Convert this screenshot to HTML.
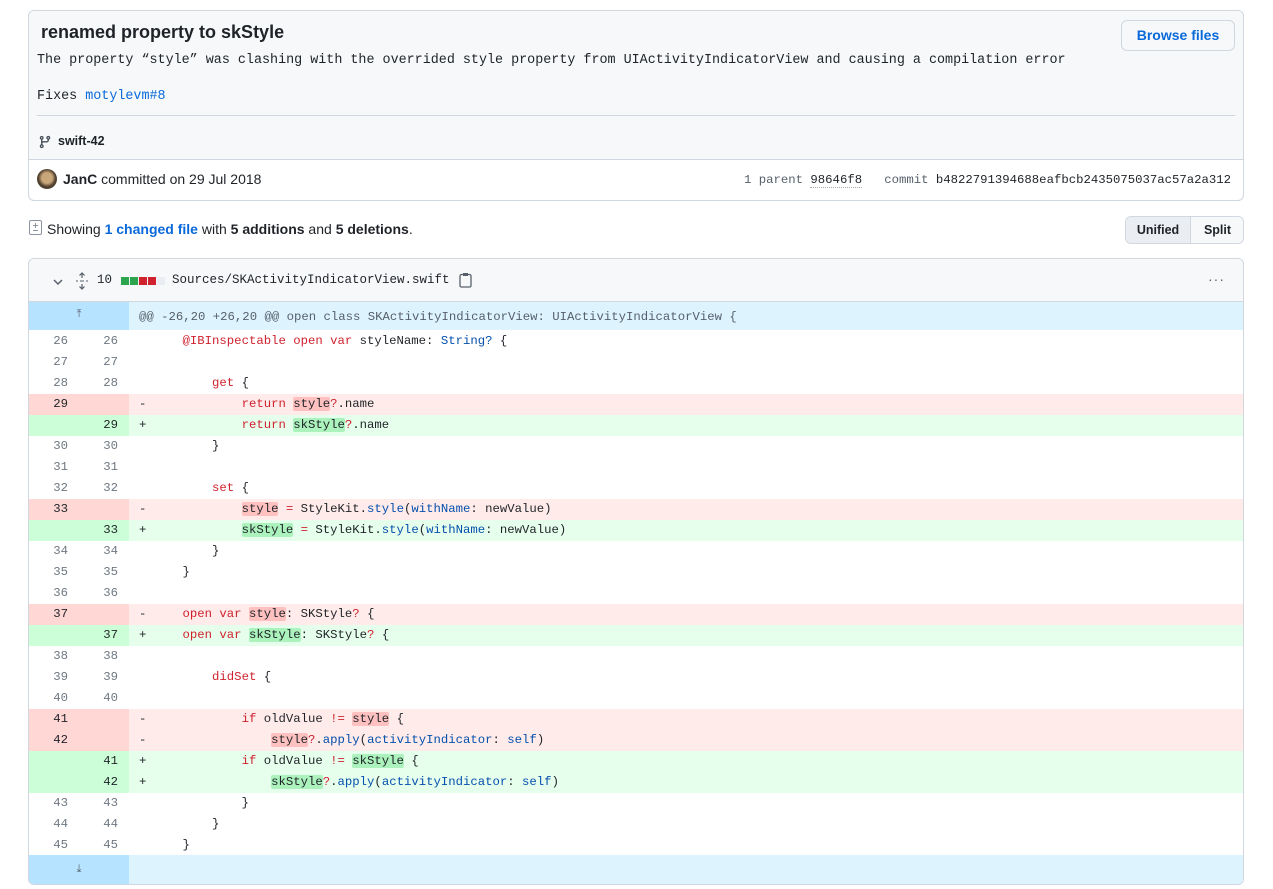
<!DOCTYPE html>
<html><head><meta charset="utf-8"><style>
*{box-sizing:border-box;margin:0;padding:0}
body{width:1273px;height:889px;background:#fff;font-family:"Liberation Sans",sans-serif;color:#1f2328;position:relative;overflow:hidden}
.mono{font-family:"Liberation Mono",monospace}
.abs{position:absolute}
#commit{left:28px;top:10px;width:1216px;height:191px;border:1px solid #d0d7de;border-radius:6px;overflow:hidden}
#chead{position:absolute;left:0;top:0;right:0;height:149px;background:#f6f8fa;border-bottom:1px solid #d0d7de}
#file{left:28px;top:258px;width:1216px;height:627px;border:1px solid #d0d7de;border-radius:6px;overflow:hidden}
#fhead{position:absolute;left:0;top:0;right:0;height:43px;background:#f6f8fa;border-bottom:1px solid #d0d7de}
.row{position:absolute;left:0;right:0;height:21px;font-family:"Liberation Mono",monospace;font-size:12.3px;line-height:21px;white-space:pre}
.n1,.n2{position:absolute;top:0;width:50px;height:21px;text-align:right;color:#6e7781}
.n1{left:0;width:50px;padding-right:11px}
.n2{left:50px;width:50px;padding-right:11px}
.g{position:absolute;left:0;top:0;width:100px;height:21px}
.m{position:absolute;left:110px;top:0}
.c{position:absolute;left:124px;top:0;color:#1f2328}
.del{background:#ffebe9}.del .g{background:#ffd7d5}
.add{background:#e6ffec}.add .g{background:#ccffd8}
.del .n1,.del .n2,.add .n1,.add .n2{color:#1f2328}
.k{color:#cf222e}.b{color:#0550ae}
.hd{background:#ff818266;border-radius:2px}
.ha{background:#abf2bc;border-radius:2px}
</style></head><body>
<div id="commit" class="abs">
 <div id="chead">
  <div class="abs" style="left:12px;top:11px;font-size:18px;font-weight:bold;">renamed property to skStyle</div>
  <div class="abs mono" style="left:8px;top:42px;font-size:13.4px;color:#1f2328;">The property “style” was clashing with the overrided style property from UIActivityIndicatorView and causing a compilation error</div>
  <div class="abs mono" style="left:8px;top:78px;font-size:13.4px;">Fixes <span style="color:#0969da">motylevm#8</span></div>
  <div class="abs" style="left:8px;right:8px;top:104px;height:1px;background:#d0d7de"></div>
  <svg class="abs" style="left:9px;top:123px" width="14" height="16" viewBox="0 0 16 16"><path fill="#444d56" d="M9.5 3.25a2.25 2.25 0 1 1 3 2.122V6A2.5 2.5 0 0 1 10 8.5H6a1 1 0 0 0-1 1v1.128a2.251 2.251 0 1 1-1.5 0V5.372a2.25 2.25 0 1 1 1.5 0v1.836A2.5 2.5 0 0 1 6 7h4a1 1 0 0 0 1-1v-.628A2.25 2.25 0 0 1 9.5 3.25Zm-6 0a.75.75 0 1 0 1.5 0 .75.75 0 0 0-1.5 0Zm8.25-.75a.75.75 0 1 0 0 1.5.75.75 0 0 0 0-1.5ZM4.25 12a.75.75 0 1 0 0 1.5.75.75 0 0 0 0-1.5Z"/></svg>
  <div class="abs" style="left:29px;top:123px;font-size:12.5px;font-weight:bold;">swift-42</div>
  <div class="abs" style="left:1092px;top:9px;width:114px;height:31px;border:1px solid #d0d7de;border-radius:6px;background:#f6f8fa;color:#0969da;font-size:14px;font-weight:bold;text-align:center;line-height:29px;">Browse files</div>
 </div>
 <div class="abs" style="left:8px;top:158px;width:20px;height:20px;border-radius:50%;background:radial-gradient(circle at 50% 45%,#c9a77a 0 35%,#4a3a2a 60%,#7a6a50 100%)"></div>
 <div class="abs" style="left:34px;top:160px;font-size:14px;"><b>JanC</b> committed on 29 Jul 2018</div>
 <div class="abs mono" style="left:715px;top:162px;font-size:12.3px;color:#57606a;">1 parent <span style="color:#1f2328;border-bottom:1px dotted #aaa">98646f8</span>&nbsp;&nbsp;&nbsp;commit <span style="color:#1f2328">b4822791394688eafbcb2435075037ac57a2a312</span></div>
</div>

<svg class="abs" style="left:29px;top:220px" width="14" height="16" viewBox="0 0 14 16"><rect x="0.5" y="0.5" width="12" height="14" rx="1.5" fill="none" stroke="#8c959f"/><path d="M6.5 3v5M4 5.5h5M4 10.5h5" stroke="#8c959f"/></svg>
<div class="abs" style="left:47px;top:221px;font-size:14px;">Showing <span style="color:#0969da;font-weight:bold">1 changed file</span> with <b>5 additions</b> and <b>5 deletions</b>.</div>
<div class="abs" style="left:1125px;top:216px;width:119px;height:28px;border:1px solid #d0d7de;border-radius:6px;overflow:hidden;font-size:12.5px;font-weight:bold;">
 <div class="abs" style="left:0;top:0;width:65px;height:26px;background:#eaeef2;border-right:1px solid #d0d7de;text-align:center;line-height:26px;">Unified</div>
 <div class="abs" style="left:65px;top:0;width:53px;height:26px;background:#f6f8fa;text-align:center;line-height:26px;">Split</div>
</div>

<div id="file" class="abs">
 <div id="fhead">
  <svg class="abs" style="left:23px;top:17px" width="12" height="12" viewBox="0 0 12 12"><path d="M2 4l4 4 4-4" fill="none" stroke="#57606a" stroke-width="1.5"/></svg>
  <svg class="abs" style="left:46px;top:13px" width="14" height="18" viewBox="0 0 14 18"><path d="M7 1v5M7 12v5M4.5 3.5L7 1l2.5 2.5M4.5 14.5L7 17l2.5-2.5" fill="none" stroke="#57606a" stroke-width="1.2"/><path d="M1 9h2M5 9h4M11 9h2" stroke="#57606a"/></svg>
  <div class="abs mono" style="left:68px;top:14px;font-size:12.5px;">10</div>
  <div class="abs" style="left:92px;top:18px;width:8px;height:8px;background:#2da44e"></div>
  <div class="abs" style="left:101px;top:18px;width:8px;height:8px;background:#2da44e"></div>
  <div class="abs" style="left:110px;top:18px;width:8px;height:8px;background:#cf222e"></div>
  <div class="abs" style="left:119px;top:18px;width:8px;height:8px;background:#cf222e"></div>
  <div class="abs" style="left:128px;top:18px;width:8px;height:8px;background:#eaeef2"></div>
  <div class="abs mono" style="left:143px;top:14px;font-size:12.5px;">Sources/SKActivityIndicatorView.swift</div>
  <svg class="abs" style="left:430px;top:13px" width="13" height="16" viewBox="0 0 13 16"><rect x="1" y="2.5" width="11" height="12.5" rx="1.5" fill="none" stroke="#57606a" stroke-width="1.3"/><rect x="4" y="1" width="5" height="3" fill="#57606a"/></svg>
  <div class="abs" style="left:1179px;top:12px;font-size:14px;color:#57606a;letter-spacing:1px;">···</div>
 </div>
 <div class="abs" style="left:0;top:43px;right:0;height:28px;background:#ddf4ff"></div>
 <div class="abs" style="left:0;top:43px;width:100px;height:28px;background:#b6e3ff;text-align:center;font-size:11px;color:#57606a;line-height:24px;">⤒</div>
 <div class="abs mono" style="left:110px;top:44px;line-height:28px;font-size:12.3px;color:#57606a;">@@ -26,20 +26,20 @@ open class SKActivityIndicatorView: UIActivityIndicatorView {</div>

 <div class="row" style="top:72px"><div class="g"></div><span class="n1">26</span><span class="n2">26</span><span class="c">    <span class="k">@IBInspectable open var</span> styleName: <span class="b">String?</span> {</span></div>
 <div class="row" style="top:93px"><div class="g"></div><span class="n1">27</span><span class="n2">27</span></div>
 <div class="row" style="top:114px"><div class="g"></div><span class="n1">28</span><span class="n2">28</span><span class="c">        <span class="k">get</span> {</span></div>
 <div class="row del" style="top:135px"><div class="g"></div><span class="n1">29</span><span class="n2"></span><span class="m">-</span><span class="c">            <span class="k">return</span> <span class="hd">style</span><span class="k">?</span>.name</span></div>
 <div class="row add" style="top:156px"><div class="g"></div><span class="n1"></span><span class="n2">29</span><span class="m">+</span><span class="c">            <span class="k">return</span> <span class="ha">skStyle</span><span class="k">?</span>.name</span></div>
 <div class="row" style="top:177px"><div class="g"></div><span class="n1">30</span><span class="n2">30</span><span class="c">        }</span></div>
 <div class="row" style="top:198px"><div class="g"></div><span class="n1">31</span><span class="n2">31</span></div>
 <div class="row" style="top:219px"><div class="g"></div><span class="n1">32</span><span class="n2">32</span><span class="c">        <span class="k">set</span> {</span></div>
 <div class="row del" style="top:240px"><div class="g"></div><span class="n1">33</span><span class="n2"></span><span class="m">-</span><span class="c">            <span class="hd">style</span> <span class="k">=</span> StyleKit.<span class="b">style</span>(<span class="b">withName</span>: newValue)</span></div>
 <div class="row add" style="top:261px"><div class="g"></div><span class="n1"></span><span class="n2">33</span><span class="m">+</span><span class="c">            <span class="ha">skStyle</span> <span class="k">=</span> StyleKit.<span class="b">style</span>(<span class="b">withName</span>: newValue)</span></div>
 <div class="row" style="top:282px"><div class="g"></div><span class="n1">34</span><span class="n2">34</span><span class="c">        }</span></div>
 <div class="row" style="top:303px"><div class="g"></div><span class="n1">35</span><span class="n2">35</span><span class="c">    }</span></div>
 <div class="row" style="top:324px"><div class="g"></div><span class="n1">36</span><span class="n2">36</span></div>
 <div class="row del" style="top:345px"><div class="g"></div><span class="n1">37</span><span class="n2"></span><span class="m">-</span><span class="c">    <span class="k">open var</span> <span class="hd">style</span>: SKStyle<span class="k">?</span> {</span></div>
 <div class="row add" style="top:366px"><div class="g"></div><span class="n1"></span><span class="n2">37</span><span class="m">+</span><span class="c">    <span class="k">open var</span> <span class="ha">skStyle</span>: SKStyle<span class="k">?</span> {</span></div>
 <div class="row" style="top:387px"><div class="g"></div><span class="n1">38</span><span class="n2">38</span></div>
 <div class="row" style="top:408px"><div class="g"></div><span class="n1">39</span><span class="n2">39</span><span class="c">        <span class="k">didSet</span> {</span></div>
 <div class="row" style="top:429px"><div class="g"></div><span class="n1">40</span><span class="n2">40</span></div>
 <div class="row del" style="top:450px"><div class="g"></div><span class="n1">41</span><span class="n2"></span><span class="m">-</span><span class="c">            <span class="k">if</span> oldValue <span class="k">!=</span> <span class="hd">style</span> {</span></div>
 <div class="row del" style="top:471px"><div class="g"></div><span class="n1">42</span><span class="n2"></span><span class="m">-</span><span class="c">                <span class="hd">style</span><span class="k">?</span>.<span class="b">apply</span>(<span class="b">activityIndicator</span>: <span class="b">self</span>)</span></div>
 <div class="row add" style="top:492px"><div class="g"></div><span class="n1"></span><span class="n2">41</span><span class="m">+</span><span class="c">            <span class="k">if</span> oldValue <span class="k">!=</span> <span class="ha">skStyle</span> {</span></div>
 <div class="row add" style="top:513px"><div class="g"></div><span class="n1"></span><span class="n2">42</span><span class="m">+</span><span class="c">                <span class="ha">skStyle</span><span class="k">?</span>.<span class="b">apply</span>(<span class="b">activityIndicator</span>: <span class="b">self</span>)</span></div>
 <div class="row" style="top:534px"><div class="g"></div><span class="n1">43</span><span class="n2">43</span><span class="c">            }</span></div>
 <div class="row" style="top:555px"><div class="g"></div><span class="n1">44</span><span class="n2">44</span><span class="c">        }</span></div>
 <div class="row" style="top:576px"><div class="g"></div><span class="n1">45</span><span class="n2">45</span><span class="c">    }</span></div>
 <div class="abs" style="left:0;top:596px;right:0;height:30px;background:#ddf4ff"></div>
 <div class="abs" style="left:0;top:596px;width:100px;height:30px;background:#b6e3ff;text-align:center;font-size:11px;color:#57606a;line-height:28px;">⤓</div>
</div>
</body></html>
